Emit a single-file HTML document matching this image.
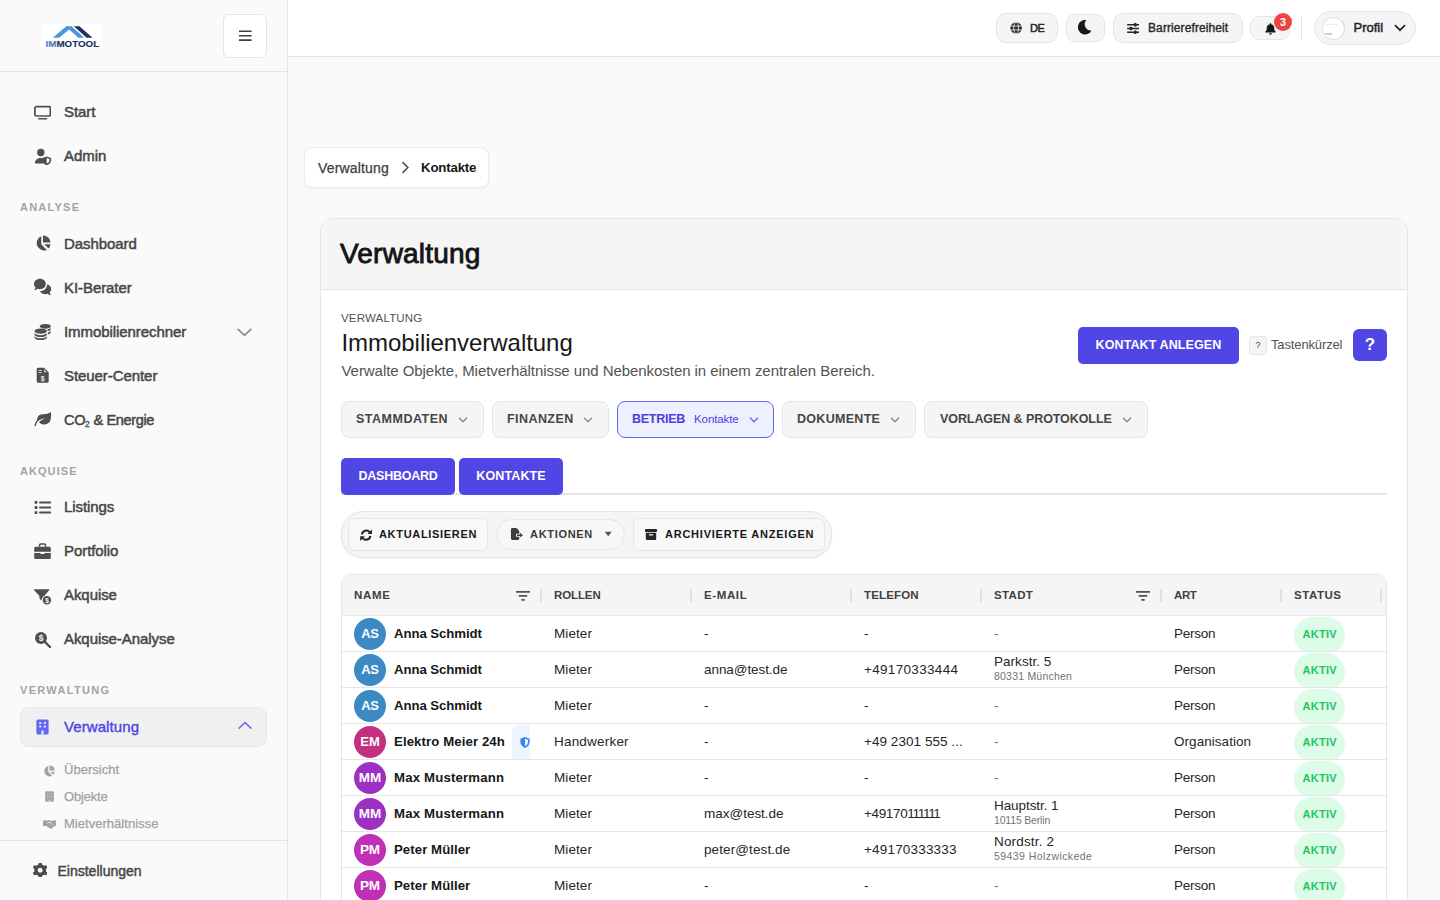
<!DOCTYPE html>
<html lang="de">
<head>
<meta charset="utf-8">
<title>Immotool – Verwaltung – Kontakte</title>
<style>
*{box-sizing:border-box;margin:0;padding:0}
html,body{width:1440px;height:900px;overflow:hidden;background:#fafafa;font-family:"Liberation Sans",sans-serif;color:#171717}
.abs{position:absolute}
svg{display:block}
/* ---------- sidebar ---------- */
#side{position:absolute;left:0;top:0;width:288px;height:900px;background:#fafafa;border-right:1px solid #e5e5e5}
#side .head{position:absolute;left:0;top:0;width:287px;height:72px;border-bottom:1px solid #e5e5e5}
#burger{position:absolute;left:223px;top:14px;width:44px;height:44px;border:1px solid #e5e5e5;border-radius:6px;background:#fff}
.nav{position:absolute;left:20px;width:247px;height:40px;font-size:15px;font-weight:400;color:#474747;letter-spacing:-.07px;-webkit-text-stroke:.5px #474747}
.nav .ic{position:absolute;left:14px;top:12px;width:17px;height:17px}
.nav .tx{position:absolute;left:44px;top:11px;line-height:18px;white-space:nowrap}
.sect{position:absolute;left:20px;font-size:11px;font-weight:700;letter-spacing:1.45px;color:#a3a3a3;line-height:12px}
.sub{position:absolute;left:44px;height:20px;font-size:13px;color:#a0a0a0;font-weight:400;white-space:nowrap;-webkit-text-stroke:.25px #a3a3a3}
.sub .tx{position:absolute;left:20px;top:2px;line-height:16px;letter-spacing:.03px}
.sub .ic{position:absolute;left:0;top:4px;width:12px;height:12px}
/* ---------- topbar ---------- */
#top{position:absolute;left:288px;top:0;width:1152px;height:57px;background:#fff;border-bottom:1px solid #e5e5e5}
.tb{position:absolute;border:1px solid #e5e5e5;background:#f5f5f5;border-radius:10px;font-size:12px;font-weight:700;color:#262626}
/* ---------- main ---------- */
#crumb{position:absolute;left:304px;top:147px;width:185px;height:41px;background:#fff;border:1px solid #ececec;border-radius:8px;box-shadow:0 1px 2px rgba(0,0,0,.06);font-size:14px}
#card{position:absolute;left:320px;top:218px;width:1088px;height:700px;background:#fff;border:1px solid #e5e5e5;border-radius:13px;overflow:hidden}
#card .chead{position:absolute;left:0;top:0;width:100%;height:71px;background:#f5f5f5;border-bottom:1px solid #e5e5e5}
.pill{position:absolute;top:401px;height:37px;border:1px solid #e5e5e5;background:#f5f5f5;border-radius:8px;font-size:12.500px;font-weight:700;color:#454545;letter-spacing:.45px;white-space:nowrap}
.pill .tx{position:absolute;left:14px;top:10px;line-height:15px}
.pill svg{position:absolute;top:14px;width:10px;height:8px}
.tab{position:absolute;top:458px;height:37px;background:#4f46e5;color:#fff;border-radius:5px;font-size:12.500px;font-weight:700;letter-spacing:.35px;line-height:36px;text-align:center}
.tool{position:absolute;top:518px;height:33px;border:1px solid #e5e5e5;background:#f8f8f8;font-size:11px;font-weight:700;letter-spacing:.7px;color:#171717;white-space:nowrap}
.tool .tx{position:absolute;top:9px;line-height:13px}
/* table */
#tbl{position:absolute;left:341px;top:574px;width:1046px;height:340px;border:1px solid #e5e5e5;border-radius:10px 10px 0 0;overflow:hidden;background:#fff}
#tbl .th{position:absolute;left:0;top:0;width:100%;height:41px;background:#f5f5f5;border-bottom:1px solid #e5e5e5}
.h{position:absolute;top:14px;font-size:11.5px;font-weight:700;letter-spacing:.85px;color:#404040;line-height:13px;white-space:nowrap}
.sep{position:absolute;top:14px;width:2px;height:13px;background:#e0e0e0}
.row{position:absolute;left:0;width:100%;height:36px;overflow:hidden;border-bottom:1px solid #e5e5e5;font-size:13.500px;color:#262626;white-space:nowrap}
.row>span,.row>div{position:absolute}
.av{left:12px;top:2.200px;width:32px;height:32px;border-radius:50%;color:#fff;font-size:12.500px;font-weight:700;text-align:center;line-height:32px}
.nm{left:52px;top:10px;font-weight:700;line-height:16px;color:#171717;font-size:13.200px;letter-spacing:-.07px}
.c{top:10px;line-height:16px;letter-spacing:.08px}
.a1{top:2px;line-height:15px;font-size:13.500px;letter-spacing:.03px}
.a2{top:18px;line-height:12px;font-size:10.500px;color:#737373;letter-spacing:.215px}
.st{left:952px;top:1px;width:51px;height:37px;border-radius:18.500px;background:#dcfce7;color:#22c55e;font-size:11px;font-weight:700;letter-spacing:.275px;padding-left:.3px;text-align:center;line-height:34px}
</style>
</head>
<body>
<aside id="side" role="navigation" aria-label="Hauptnavigation">
  <div class="head">
    <svg class="abs" style="left:41px;top:24px" width="62" height="24" viewBox="0 0 62 24">
      <rect width="62" height="24" fill="#fff"/>
      <path d="M11.900 13.750L25.300 2.200H30.600L43.100 13.750H37.500L28.100 5.600L18.100 13.750Z" fill="#4a94dc"/>
      <path d="M32.800 2.200H38.400L51.600 13.750H45.600Z" fill="#1e3264"/>
      <text x="4.600" y="22.800" font-family="Liberation Sans, sans-serif" font-weight="700" font-size="9" fill="#1e3264" stroke="#1e3264" stroke-width=".15" textLength="53.600" lengthAdjust="spacingAndGlyphs"><tspan fill="#4a94dc">IM</tspan>MOTOOL</text>
    </svg>
  </div>
  <div id="burger"><svg class="abs" style="left:15px;top:15px" width="13" height="12" viewBox="0 0 13 12"><path d="M0 1.3h12.600M0 5.700h12.600M0 10.100h12.600" stroke="#404040" stroke-width="1.600"/></svg></div>

  <div role="link" class="nav" style="top:92px"><svg class="ic" viewBox="0 0 17 17"><rect x=".9" y="2.700" width="15.400" height="9.300" rx="1.400" fill="none" stroke="#4f4f4f" stroke-width="1.700"/><rect x="4" y="13.900" width="9.300" height="1.700" rx=".8" fill="#4f4f4f"/></svg><span class="tx">Start</span></div>
  <div role="link" class="nav" style="top:136px"><svg class="ic" style="overflow:visible" viewBox="0 0 17 17"><circle cx="6.800" cy="4.500" r="3.700" fill="#4f4f4f"/><path d="M.9 15.600c0-3.200 2.200-5.500 5.400-5.500h.6c.7 0 1.300.100 1.900.300v2c0 1.200.4 2.300 1.100 3.200z" fill="#4f4f4f"/><path d="M12.700 8.400l4.400 1.500v2.600c0 2.200-1.800 3.900-4.400 4.700-2.600-.8-4.400-2.500-4.400-4.700V9.900z" fill="#4f4f4f"/><path d="M12.700 10v5.500c1.700-.6 2.800-1.700 2.800-3.100v-1.500z" fill="#fafafa"/></svg><span class="tx">Admin</span></div>

  <div class="sect" style="top:201px;letter-spacing:1.240px">ANALYSE</div>
  <div role="link" class="nav" style="top:224px"><svg class="ic" style="top:11px;left:13.500px" viewBox="0 0 17 17"><path d="M7.300 1.300v8l5.500 5.600A7.300 7.300 0 1 1 7.300 1.300z" fill="#4f4f4f"/><path d="M9 .4a7.300 7.300 0 0 1 7.400 7.200H9z" fill="#4f4f4f"/><path d="M10.200 9.200h6.200a7.300 7.300 0 0 1-1.900 4.400z" fill="#4f4f4f"/></svg><span class="tx">Dashboard</span></div>
  <div role="link" class="nav" style="top:268px"><svg class="ic" style="overflow:visible" viewBox="0 0 17 17"><path d="M5.900-1.200c3.300 0 5.900 2.300 5.900 5.200s-2.600 5.200-5.900 5.200c-.8 0-1.500-.1-2.200-.4-.9.700-2.200 1.200-3.500 1.300.8-.9 1.300-1.800 1.400-2.700C.6 6.500 0 5.300 0 4c0-2.900 2.600-5.200 5.900-5.200z" fill="#4f4f4f"/><path d="M13.100 4.300c2.400.6 4.100 2.500 4.100 4.700 0 1.300-.6 2.500-1.500 3.400.1.900.6 1.800 1.400 2.700-1.300-.1-2.600-.6-3.500-1.300-.7.300-1.400.4-2.200.4-2.400 0-4.500-1.200-5.400-3 4.100-.1 7.300-3 7.100-6.900z" fill="#4f4f4f"/></svg><span class="tx">KI-Berater</span></div>
  <div role="link" class="nav" style="top:312px"><svg class="ic" style="overflow:visible" viewBox="0 0 17 17"><ellipse cx="11.300" cy="2.300" rx="5.400" ry="2.400" fill="#4f4f4f"/><path d="M13.600 5.200c1.500-.3 2.600-.8 3.100-1.500v1.500c0 .9-1.200 1.700-3.100 2.100zM13.900 8.500c1.400-.3 2.400-.8 2.800-1.400v1.500c0 .8-1.100 1.500-2.800 1.900z" fill="#4f4f4f"/><ellipse cx="6.700" cy="7.100" rx="6.200" ry="2.600" fill="#4f4f4f"/><path d="M.5 9.100c1 1.400 3.300 2.100 6.200 2.100s5.200-.7 6.200-2.100v1.400c0 1.500-2.800 2.600-6.200 2.600S.5 12 .5 10.500z" fill="#4f4f4f"/><path d="M.5 12.200c1 1.400 3.300 2.100 6.200 2.100s5.200-.7 6.200-2.100v1.300c0 1.500-2.800 2.600-6.200 2.600S.5 15 .5 13.500z" fill="#4f4f4f"/></svg><span class="tx">Immobilienrechner</span>
    <svg class="abs" style="left:217px;top:16px" width="15" height="9" viewBox="0 0 15 9"><path d="M1.200 1.400l6.300 6 6.300-6" fill="none" stroke="#8a8a8a" stroke-width="1.700" stroke-linecap="round"/></svg></div>
  <div role="link" class="nav" style="top:356px"><svg class="ic" style="overflow:visible" viewBox="0 0 17 17"><path d="M2.700 1.300c0-.8.7-1.500 1.500-1.500h5.800l4.700 4.500v9c0 .8-.7 1.500-1.500 1.500H4.200c-.8 0-1.500-.7-1.500-1.500z" fill="#4f4f4f"/><path d="M4.700 2.500h3M4.700 4.600h3" stroke="#e8e8e8" stroke-width=".9"/><path d="M10 1.200v3h3z" fill="#d0d0d0"/><text x="8.700" y="12.700" font-size="7" font-weight="700" fill="#f0f0f0" text-anchor="middle" font-family="Liberation Sans, sans-serif">$</text></svg><span class="tx">Steuer-Center</span></div>
  <div role="link" class="nav" style="top:400px"><svg class="ic" style="overflow:visible" viewBox="0 0 17 17"><path d="M16.900 0C17.300 3 17.200 6.500 16.200 8.800C15 11.500 12.500 12.600 9.800 12.500C7.800 12.400 6.200 11.500 5.200 10.200C6.500 8.700 8.500 7.300 11.100 6.500C8.300 6.400 5.700 7.500 3.900 9.300C2.800 10.500 2.200 12 2 14L.5 14C.7 11.800 1.500 10 2.900 8.500C3.200 7.800 3.300 6.500 3.600 5.300C4.300 3.300 6.500 2.300 9 2.200C12 2.100 14.800 1.600 16.900 0Z" fill="#4f4f4f"/></svg><span class="tx" style="font-size:14.600px;letter-spacing:-.4px">CO<span style="font-size:8.500px;position:relative;top:1.800px;letter-spacing:0;-webkit-text-stroke:.3px #474747">2</span> &amp; Energie</span></div>

  <div class="sect" style="top:465px;letter-spacing:1.060px">AKQUISE</div>
  <div role="link" class="nav" style="top:487px"><svg class="ic" viewBox="0 0 17 17"><rect x=".6" y="2" width="2.800" height="2.800" rx=".6" fill="#4f4f4f"/><rect x=".6" y="7.100" width="2.800" height="2.800" rx=".6" fill="#4f4f4f"/><rect x=".6" y="12.200" width="2.800" height="2.800" rx=".6" fill="#4f4f4f"/><path d="M6 3.400h10.400M6 8.500h10.400M6 13.600h10.400" stroke="#4f4f4f" stroke-width="2" stroke-linecap="round"/></svg><span class="tx">Listings</span></div>
  <div role="link" class="nav" style="top:531px"><svg class="ic" viewBox="0 0 17 17"><path d="M5.500 3.800V2.400c0-.8.600-1.400 1.400-1.400h3.200c.8 0 1.400.6 1.400 1.400v1.400" fill="none" stroke="#4f4f4f" stroke-width="1.600"/><path d="M1.800 3.800h13.400c.9 0 1.600.7 1.600 1.600v3.400H.2V5.400c0-.9.700-1.600 1.600-1.600z" fill="#4f4f4f"/><path d="M.2 9.900h6.300v1.200h4V9.900h6.300v4.500c0 .9-.7 1.600-1.600 1.600H1.800c-.9 0-1.600-.7-1.600-1.600z" fill="#4f4f4f"/></svg><span class="tx">Portfolio</span></div>
  <div role="link" class="nav" style="top:575px"><svg class="ic" style="top:13px;overflow:visible" viewBox="0 0 17 17"><path d="M.6 1.200h14c.5 0 .8.600.5 1L10.300 8c-1.700.9-2.700 2.500-2.800 4.400L5.500 10.700V8L.1 2.200c-.3-.4 0-1 .5-1z" fill="#4f4f4f"/><circle cx="12.900" cy="12.300" r="4.900" fill="#fafafa"/><circle cx="12.900" cy="12.300" r="4.200" fill="#4f4f4f"/><text x="12.900" y="14.800" font-size="6.500" font-weight="700" fill="#fafafa" text-anchor="middle" font-family="Liberation Sans, sans-serif">$</text></svg><span class="tx">Akquise</span></div>
  <div role="link" class="nav" style="top:619px"><svg class="ic" viewBox="0 0 17 17"><circle cx="7" cy="7" r="6" fill="#4f4f4f"/><path d="M11 11l5 5" stroke="#4f4f4f" stroke-width="2.400" stroke-linecap="round"/><text x="7" y="10.100" font-size="8.500" font-weight="700" fill="#fafafa" text-anchor="middle" font-family="Liberation Sans, sans-serif">$</text></svg><span class="tx">Akquise-Analyse</span></div>

  <div class="sect" style="top:684px;letter-spacing:1.310px">VERWALTUNG</div>
  <div role="link" class="nav" style="top:707px;background:#f0f0f0;border:1px solid #e7e7e7;border-radius:9px;color:#4f46e5;font-weight:400"><svg class="ic" style="left:15px;top:11px;width:13px;height:16px" viewBox="0 0 13 16"><rect x=".4" y=".4" width="12.200" height="15.200" rx="1.700" fill="#6366f1"/><path d="M3.200 2.900h2v2h-2zM7.800 2.900h2v2h-2zM3.200 6.600h2v2h-2zM7.800 6.600h2v2h-2z" fill="#e4e4fd"/><path d="M5.200 15.600v-3c0-.7.600-1.300 1.300-1.300s1.300.6 1.300 1.300v3z" fill="#dcdcfa"/></svg><span class="tx" style="left:43px;top:10px;letter-spacing:.085px;-webkit-text-stroke:.4px #4f46e5">Verwaltung</span>
    <svg class="abs" style="left:217px;top:13px" width="14" height="8.400" viewBox="0 0 15 9"><path d="M1.200 7.600l6.300-6 6.300 6" fill="none" stroke="#6c6af2" stroke-width="1.700" stroke-linecap="round"/></svg></div>

  <div class="sub" style="top:760px"><svg class="ic" style="left:-.7px;top:4.500px" viewBox="0 0 12 12"><path d="M5.300 1v5.700l4 4A5.300 5.300 0 1 1 5.300 1z" fill="#a3a3a3"/><path d="M6.500.3a5.200 5.200 0 0 1 5.200 5.200H6.500z" fill="#a3a3a3"/><path d="M7.300 6.700h4.400a5.200 5.200 0 0 1-1.300 3.100z" fill="#a3a3a3"/></svg><span class="tx">Übersicht</span></div>
  <div class="sub" style="top:787px"><svg class="ic" style="left:1px;top:4px;width:9px;height:11px" viewBox="0 0 9 11"><rect x=".2" y=".2" width="8.600" height="10.600" rx="1" fill="#a3a3a3"/><path d="M2.200 2.200h1.300v1.300H2.200zM5.500 2.200h1.300v1.300H5.500zM2.200 4.800h1.300v1.300H2.200zM5.500 4.800h1.300v1.300H5.500z" fill="#d4d4d4"/><path d="M3.600 10.800V8.700h1.800v2.100z" fill="#cfcfcf"/></svg><span class="tx" style="letter-spacing:-.18px">Objekte</span></div>
  <div class="sub" style="top:814px"><svg class="ic" style="left:-1px;width:13.300px" viewBox="0 0 14 12"><path d="M0 2.500l2.200-.8 2 1 2.300-.9 1 .3 2.300.800 2-1 2.200.8v5.500h-1.800l-2.800 2.500c-.6.500-1.500.5-2.100 0L3.600 8.200H0z" fill="#a3a3a3"/><path d="M4.500 5.500l2-1.700 3.500 3" stroke="#fafafa" stroke-width=".8" fill="none"/></svg><span class="tx">Mietverhältnisse</span></div>

  <div class="abs" style="left:0;top:840px;width:287px;height:60px;background:#fafafa;border-top:1px solid #e5e5e5">
    <svg class="abs" style="left:33px;top:22px" width="14.400" height="14.400" viewBox="0 0 14.400 14.400"><path d="M6.06 1.82L6.22 0.07L8.18 0.07L8.34 1.82L11.29 3.52L12.89 2.79L13.87 4.48L12.43 5.50L12.43 8.90L13.87 9.92L12.89 11.61L11.29 10.88L8.34 12.58L8.18 14.33L6.22 14.33L6.06 12.58L3.11 10.88L1.51 11.61L0.53 9.92L1.97 8.90L1.97 5.50L0.53 4.48L1.51 2.79L3.11 3.52Z" fill="#4a4a4a" stroke="#4a4a4a" stroke-width="1.200" stroke-linejoin="round"/><circle cx="7.200" cy="7.200" r="2.500" fill="#fafafa"/></svg>
    <span class="abs" style="left:57.500px;top:21px;font-size:14px;font-weight:400;color:#454545;-webkit-text-stroke:.45px #454545;line-height:18px;letter-spacing:0">Einstellungen</span>
  </div>
</aside>
<header id="top">
  <div role="button" class="tb" style="left:708px;top:13px;width:62px;height:30px"><svg class="abs" style="left:13px;top:8px" width="12.300" height="12" viewBox="0 0 12 12"><circle cx="6" cy="6" r="5.800" fill="#262626"/><ellipse cx="6" cy="6" rx="2.400" ry="5.800" fill="none" stroke="#f5f5f5" stroke-width=".85"/><path d="M.2 4.100h11.600M.2 7.900h11.600" stroke="#f5f5f5" stroke-width=".85"/></svg><span class="abs" style="left:33px;top:8px;line-height:13px;font-weight:400;font-size:11px;letter-spacing:-.4px;-webkit-text-stroke:.5px #262626">DE</span></div>
  <div role="button" class="tb" style="left:778px;top:14px;width:39px;height:28px;border-radius:9px"><svg class="abs" style="left:11px;top:5px" width="14" height="14.500" viewBox="0 0 14 14.500"><path d="M8.300 0A7.250 7.250 0 1 0 13.600 10.600A6.400 6.400 0 0 1 8.300 0Z" fill="#171717"/></svg></div>
  <div role="button" class="tb" style="left:825px;top:13px;width:130px;height:30px"><svg class="abs" style="left:13px;top:8.500px" width="12.300" height="11" viewBox="0 0 12 11"><path d="M0 1.800h12M0 5.500h12M0 9.200h12" stroke="#262626" stroke-width="1.550"/><rect x="6.900" y="0" width="2.500" height="3.600" rx=".7" fill="#262626"/><rect x="2.500" y="3.700" width="2.500" height="3.600" rx=".7" fill="#262626"/><rect x="6.900" y="7.400" width="2.500" height="3.600" rx=".7" fill="#262626"/></svg><span class="abs" style="left:34px;top:8px;line-height:13px;font-weight:400;letter-spacing:.1px;-webkit-text-stroke:.35px #262626">Barrierefreiheit</span></div>
  <div role="button" class="tb" style="left:962px;top:16px;width:40px;height:24px;border-radius:9px"><svg class="abs" style="left:13.500px;top:5.500px" width="11" height="12" viewBox="0 0 12 13"><path d="M6 0c.5 0 .8.300.8.800v.5c2 .4 3.300 2 3.300 4.100v1.900l1.400 2c.3.500 0 1-.5 1H1c-.5 0-.8-.5-.5-1l1.400-2V5.400c0-2.100 1.300-3.700 3.300-4.100V.8c0-.5.300-.8.800-.8z" fill="#171717"/><path d="M4.400 11.200h3.200c0 .9-.7 1.600-1.600 1.600s-1.600-.7-1.600-1.600z" fill="#171717"/></svg></div>
  <div class="abs" style="left:986px;top:13px;width:18px;height:18px;border-radius:9px;background:#ef4444;color:#fff;font-size:11px;font-weight:700;text-align:center;line-height:18px">3</div>
  <div class="abs" style="left:1013px;top:16px;width:1px;height:24px;background:#e0e0e0"></div>
  <div role="button" class="tb" style="left:1026px;top:11px;width:102px;height:34px;border-radius:17px;font-size:14px"><div class="abs" style="left:7px;top:5px;width:23px;height:23px;border-radius:12px;background:#fff;border:1px solid #e6e6e6;border-right-color:#d6d6d6"></div><div class="abs" style="left:11px;top:12px;width:12px;height:1px;background:#ececec"></div><div class="abs" style="left:10px;top:21px;width:7px;height:2px;background:#cfcfcf"></div><span class="abs" style="left:38.500px;top:8px;line-height:16px;font-weight:400;-webkit-text-stroke:.5px #262626;font-size:13px">Profil</span><svg class="abs" style="left:79px;top:12px" width="12" height="8" viewBox="0 0 12 8"><path d="M1 1.200l5 5 5-5" fill="none" stroke="#262626" stroke-width="1.700"/></svg></div>
</header>
<nav id="crumb" aria-label="Breadcrumb">
  <span class="abs" style="left:13px;top:11.600px;line-height:16px;color:#404040;-webkit-text-stroke:.25px #404040;letter-spacing:.17px">Verwaltung</span>
  <svg class="abs" style="left:96px;top:12.500px" width="9" height="13" viewBox="0 0 9 13"><path d="M1.500 1.200l5.300 5.300-5.300 5.300" fill="none" stroke="#555560" stroke-width="1.700"/></svg>
  <span class="abs" style="left:116px;top:11.600px;line-height:16px;font-weight:700;color:#171717;font-size:13.300px;letter-spacing:-.2px">Kontakte</span>
</nav>
<div id="card"><div class="chead"><span class="abs" style="left:19px;top:18px;font-size:28px;font-weight:400;line-height:34px;color:#141414;letter-spacing:.2px;-webkit-text-stroke:.85px #141414">Verwaltung</span></div></div>

<span class="abs" style="left:341px;top:311px;font-size:11.500px;line-height:14px;letter-spacing:.175px;color:#525252">VERWALTUNG</span>
<span class="abs" style="left:341.500px;top:328px;font-size:24px;line-height:30px;color:#171717;letter-spacing:-.045px">Immobilienverwaltung</span>
<span class="abs" style="left:341.500px;top:362px;font-size:15px;line-height:18px;color:#525252;letter-spacing:-.058px">Verwalte Objekte, Mietverhältnisse und Nebenkosten in einem zentralen Bereich.</span>

<div class="abs" style="left:1078px;top:327px;width:161px;height:37px;background:#4f46e5;border-radius:5px;color:#fff;font-size:12.500px;font-weight:700;letter-spacing:.1px;text-align:center;line-height:36px">KONTAKT ANLEGEN</div>
<div class="abs" style="left:1249px;top:336px;width:18px;height:19px;background:#f5f5f5;border:1px solid #e5e5e5;border-radius:3px;font-size:9px;color:#404040;text-align:center;line-height:17px">?</div>
<span class="abs" style="left:1271px;top:337px;font-size:13px;line-height:16px;color:#525252;letter-spacing:-.136px">Tastenkürzel</span>
<div class="abs" style="left:1353px;top:329px;width:34px;height:32px;background:#4f46e5;border-radius:6px;color:#fff;font-size:17px;font-weight:700;text-align:center;line-height:32px">?</div>

<div role="button" class="pill" style="left:341px;width:143px"><span class="tx" style="letter-spacing:.5px">STAMMDATEN</span><svg style="left:116px" viewBox="0 0 10 8"><path d="M1 1.800l4 4 4-4" fill="none" stroke="#8c8c8c" stroke-width="1.400"/></svg></div>
<div role="button" class="pill" style="left:492px;width:117px"><span class="tx" style="letter-spacing:.43px">FINANZEN</span><svg style="left:90px" viewBox="0 0 10 8"><path d="M1 1.800l4 4 4-4" fill="none" stroke="#8c8c8c" stroke-width="1.400"/></svg></div>
<div role="button" class="pill" style="left:617px;width:157px;background:#eef0ff;border-color:#6366f1;color:#4a41dc"><span class="tx" style="letter-spacing:-.27px">BETRIEB</span><span class="abs" style="left:76px;top:10.300px;font-size:11.500px;font-weight:400;letter-spacing:-.09px;line-height:14px">Kontakte</span><svg style="left:131px" viewBox="0 0 10 8"><path d="M1 1.800l4 4 4-4" fill="none" stroke="#6366f1" stroke-width="1.400"/></svg></div>
<div role="button" class="pill" style="left:782px;width:134px"><span class="tx" style="letter-spacing:.3px">DOKUMENTE</span><svg style="left:107px" viewBox="0 0 10 8"><path d="M1 1.800l4 4 4-4" fill="none" stroke="#8c8c8c" stroke-width="1.400"/></svg></div>
<div role="button" class="pill" style="left:924px;width:224px"><span class="tx" style="left:15px;letter-spacing:-.08px">VORLAGEN &amp; PROTOKOLLE</span><svg style="left:197px" viewBox="0 0 10 8"><path d="M1 1.800l4 4 4-4" fill="none" stroke="#8c8c8c" stroke-width="1.400"/></svg></div>

<div class="abs" style="left:341px;top:493px;width:1046px;height:2px;background:#e5e5e5"></div>
<div role="tab" class="tab" style="left:341px;width:114px;letter-spacing:-.245px">DASHBOARD</div>
<div role="tab" class="tab" style="left:459px;width:104px;letter-spacing:.127px">KONTAKTE</div>

<div class="abs" style="left:341px;top:511px;width:491px;height:47px;background:#f5f5f5;border:1px solid #e5e5e5;border-radius:22px;box-shadow:0 1px 2px rgba(0,0,0,.05)"></div>
<div role="button" class="tool" style="left:348px;width:140px;border-radius:6px"><svg class="abs" style="left:11px;top:9.500px" width="12.300" height="12.300" viewBox="0 0 13 13"><path d="M2 5.700A4.600 4.600 0 0 1 10.200 3.400M11 7.300A4.600 4.600 0 0 1 2.800 9.600" fill="none" stroke="#262626" stroke-width="2.200"/><path d="M12.800.3v5H7.800zM.2 12.700v-5h5z" fill="#262626"/></svg><span class="tx" style="left:30px;letter-spacing:.68px">AKTUALISIEREN</span></div>
<div role="button" class="tool" style="left:496px;top:519px;height:31px;width:129px;border-radius:16px;background:#f7f7f7"><svg class="abs" style="left:13px;top:8px" width="13" height="12" viewBox="0 0 14 13"><path d="M1 1.500C1 .7 1.700 0 2.500 0h4.300L10 3.200v3H6.500v3.200H10v2.100c0 .8-.7 1.500-1.500 1.500h-6C1.700 13 1 12.300 1 11.500z" fill="#3d3d3d"/><path d="M7.500 7h3.500V5.200l3 2.600-3 2.600V8.600H7.500z" fill="#3d3d3d"/></svg><span class="tx" style="left:33px;top:8px;letter-spacing:.69px;color:#3a3a3a">AKTIONEN</span><svg class="abs" style="left:107px;top:11px" width="8.500" height="6" viewBox="0 0 9 7"><path d="M.5 1h8L4.500 6z" fill="#525252"/></svg></div>
<div role="button" class="tool" style="left:633px;width:192px;border-radius:6px"><svg class="abs" style="left:11px;top:10px" width="12" height="11" viewBox="0 0 12 12" preserveAspectRatio="none"><rect x="0" y="0" width="12" height="3.200" rx=".7" fill="#262626"/><path d="M.8 4.200h10.400v6.300c0 .8-.6 1.400-1.400 1.400H2.200c-.8 0-1.400-.6-1.400-1.400z" fill="#262626"/><rect x="3.800" y="5.700" width="4.400" height="1.300" rx=".6" fill="#fafafa"/></svg><span class="tx" style="left:31px;letter-spacing:.76px">ARCHIVIERTE ANZEIGEN</span></div>
<div id="tbl" role="table" aria-label="Kontakte"><div class="th" role="row"><span role="columnheader" class="h" style="left:12px;letter-spacing:0.710px">NAME</span><span role="columnheader" class="h" style="left:212px;letter-spacing:-0.115px">ROLLEN</span><span role="columnheader" class="h" style="left:362px;letter-spacing:0.620px">E-MAIL</span><span role="columnheader" class="h" style="left:522px;letter-spacing:0.154px">TELEFON</span><span role="columnheader" class="h" style="left:652px;letter-spacing:0.354px">STADT</span><span role="columnheader" class="h" style="left:832px;letter-spacing:-0.369px">ART</span><span role="columnheader" class="h" style="left:952px;letter-spacing:0.539px">STATUS</span><div class="sep" style="left:198px"></div><div class="sep" style="left:348px"></div><div class="sep" style="left:508px"></div><div class="sep" style="left:638px"></div><div class="sep" style="left:818px"></div><div class="sep" style="left:938px"></div><div class="sep" style="left:1038px"></div><svg class="abs" style="left:174px;top:15.500px" width="14" height="10" viewBox="0 0 14 10"><path d="M0 .9h14M2.800 4.900h8.400M5.300 8.900h3.400" stroke="#525252" stroke-width="1.600"/></svg><svg class="abs" style="left:794px;top:15.500px" width="14" height="10" viewBox="0 0 14 10"><path d="M0 .9h14M2.800 4.900h8.400M5.300 8.900h3.400" stroke="#525252" stroke-width="1.600"/></svg></div>
<div role="row" class="row" style="top:41px"><div class="av" style="background:#3b8ac4;font-size:13px;letter-spacing:-.35px;text-indent:-.35px">AS</div><span class="nm">Anna Schmidt</span><span class="c" style="left:212px">Mieter</span><span class="c" style="left:362px;letter-spacing:-.07px">-</span><span class="c" style="left:522px;letter-spacing:.32px">-</span><span class="c" style="left:652px;color:#737373">-</span><span class="c" style="left:832px;letter-spacing:-.24px">Person</span><div class="st">AKTIV</div></div>
<div role="row" class="row" style="top:77px"><div class="av" style="background:#3b8ac4;font-size:13px;letter-spacing:-.35px;text-indent:-.35px">AS</div><span class="nm">Anna Schmidt</span><span class="c" style="left:212px">Mieter</span><span class="c" style="left:362px;letter-spacing:-.07px">anna@test.de</span><span class="c" style="left:522px;letter-spacing:.32px">+49170333444</span><span class="a1" style="left:652px">Parkstr. 5</span><span class="a2" style="left:652px">80331 München</span><span class="c" style="left:832px;letter-spacing:-.24px">Person</span><div class="st">AKTIV</div></div>
<div role="row" class="row" style="top:113px"><div class="av" style="background:#3b8ac4;font-size:13px;letter-spacing:-.35px;text-indent:-.35px">AS</div><span class="nm">Anna Schmidt</span><span class="c" style="left:212px">Mieter</span><span class="c" style="left:362px;letter-spacing:-.07px">-</span><span class="c" style="left:522px;letter-spacing:.32px">-</span><span class="c" style="left:652px;color:#737373">-</span><span class="c" style="left:832px;letter-spacing:-.24px">Person</span><div class="st">AKTIV</div></div>
<div role="row" class="row" style="top:149px"><div class="av" style="background:#c2307f;font-size:13px;letter-spacing:-.1px">EM</div><span class="nm" style="letter-spacing:0.100px">Elektro Meier 24h</span><div style="left:170px;top:1px;width:18px;height:35px;background:#eff5ff;border-radius:5px 0 0 5px"><svg class="abs" style="left:8px;top:12px" width="10" height="11" viewBox="0 0 10 11"><path d="M5 0l4.600 1.700v3.400c0 2.700-1.900 4.800-4.600 5.900C2.300 9.900.4 7.800.4 5.100V1.700z" fill="#3b82f6"/><path d="M5 1.700v7.500c1.800-.9 3-2.300 3-4.100V2.800z" fill="#eff5ff"/></svg></div><span class="c" style="left:212px;letter-spacing:0.200px">Handwerker</span><span class="c" style="left:362px;letter-spacing:-.07px">-</span><span class="c" style="left:522px;letter-spacing:0.050px">+49 2301 555 ...</span><span class="c" style="left:652px;color:#737373">-</span><span class="c" style="left:832px;letter-spacing:0.050px">Organisation</span><div class="st">AKTIV</div></div>
<div role="row" class="row" style="top:185px"><div class="av" style="background:#9b30c2;font-size:13.500px;letter-spacing:0">MM</div><span class="nm" style="letter-spacing:0.180px">Max Mustermann</span><span class="c" style="left:212px">Mieter</span><span class="c" style="left:362px;letter-spacing:-.07px">-</span><span class="c" style="left:522px;letter-spacing:.32px">-</span><span class="c" style="left:652px;color:#737373">-</span><span class="c" style="left:832px;letter-spacing:-.24px">Person</span><div class="st">AKTIV</div></div>
<div role="row" class="row" style="top:221px"><div class="av" style="background:#9b30c2;font-size:13.500px;letter-spacing:0">MM</div><span class="nm" style="letter-spacing:0.180px">Max Mustermann</span><span class="c" style="left:212px">Mieter</span><span class="c" style="left:362px;letter-spacing:-0.014px">max@test.de</span><span class="c" style="left:522px;letter-spacing:-.35px">+49170<span style="position:static;letter-spacing:-1.300px">111111</span></span><span class="a1" style="left:652px;letter-spacing:-0.070px">Hauptstr. 1</span><span class="a2" style="left:652px;letter-spacing:-0.176px">10115 Berlin</span><span class="c" style="left:832px;letter-spacing:-.24px">Person</span><div class="st">AKTIV</div></div>
<div role="row" class="row" style="top:257px"><div class="av" style="background:#c030b5;font-size:13.500px;letter-spacing:-.15px">PM</div><span class="nm" style="letter-spacing:0.070px">Peter Müller</span><span class="c" style="left:212px">Mieter</span><span class="c" style="left:362px;letter-spacing:0.100px">peter@test.de</span><span class="c" style="left:522px;letter-spacing:0.184px">+49170333333</span><span class="a1" style="left:652px;letter-spacing:0.164px">Nordstr. 2</span><span class="a2" style="left:652px;letter-spacing:0.427px">59439 Holzwickede</span><span class="c" style="left:832px;letter-spacing:-.24px">Person</span><div class="st">AKTIV</div></div>
<div role="row" class="row" style="top:293px"><div class="av" style="background:#c030b5;font-size:13.500px;letter-spacing:-.15px">PM</div><span class="nm" style="letter-spacing:0.070px">Peter Müller</span><span class="c" style="left:212px">Mieter</span><span class="c" style="left:362px;letter-spacing:-.07px">-</span><span class="c" style="left:522px;letter-spacing:.32px">-</span><span class="c" style="left:652px;color:#737373">-</span><span class="c" style="left:832px;letter-spacing:-.24px">Person</span><div class="st">AKTIV</div></div>
</div>
</body>
</html>
